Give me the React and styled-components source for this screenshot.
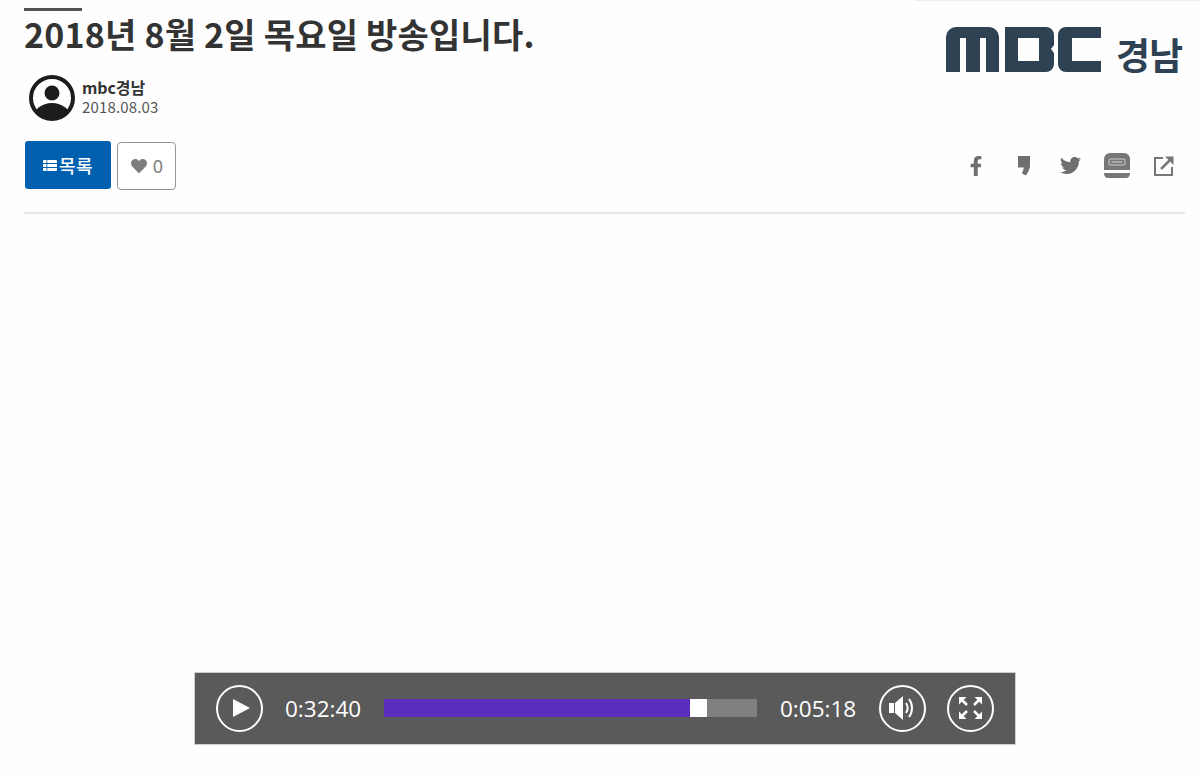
import React from "react";
import styled, { createGlobalStyle } from "styled-components";
import { FaFacebookF, FaTwitter, FaHeart } from "react-icons/fa";

const Global = createGlobalStyle`
  html, body { margin: 0; padding: 0; background: #fff; }
  body { font-family: "Noto Sans CJK KR", "Noto Sans", sans-serif; }
`;
const Page = styled.div`
  width: 1200px; height: 778px; overflow: hidden; box-sizing: border-box;
  padding: 0 14px 0 24px; position: relative; background: #fefefe;
`;
const CornerLine = styled.div`
  position: absolute; top: 0; right: 0; width: 285px; height: 1px; background: #eeeeee;
`;
const Head = styled.header`
  display: flex; justify-content: space-between; align-items: flex-start;
  height: 75px;
`;
const TitleBlock = styled.div`
  padding-top: 8px;
`;
const Rule = styled.div`
  width: 58px; height: 3px; background: #555;
`;
const Title = styled.h1`
  margin: 0; font-size: 34px; line-height: 45px; font-weight: 700; color: #333;
  letter-spacing: 0.2px; white-space: nowrap;
`;
const Logo = styled.div`
  display: flex; align-items: flex-end; gap: 15px; padding: 27px 4px 0 0;
  color: #2f4254;
`;
const LogoRegion = styled.span`
  font-size: 37px; line-height: 37px; font-weight: 700; letter-spacing: -1px; margin-bottom: -1px;
`;
const Author = styled.div`
  display: flex; align-items: center; gap: 7px; padding-left: 5px; height: 46px;
`;
const AuthorText = styled.div`
  display: flex; flex-direction: column; padding-bottom: 2px;
`;
const Name = styled.span`
  font-size: 16px; line-height: 19px; font-weight: 700; color: #333; letter-spacing: -0.1px;
`;
const DateText = styled.span`
  font-size: 15px; line-height: 20px; color: #555; letter-spacing: 0.15px;
`;
const Actions = styled.div`
  display: flex; justify-content: space-between; align-items: center;
  height: 49px; margin-top: 20px; padding-left: 1px;
`;
const Buttons = styled.div`
  display: flex; gap: 6px; align-items: flex-start;
`;
const ListButton = styled.button`
  display: flex; align-items: center; justify-content: center; gap: 2px;
  width: 86px; height: 48px; padding: 0; border: 0; border-radius: 3px;
  background: #0060b0; color: #fff; font: 500 18px "Noto Sans CJK KR", sans-serif;
  letter-spacing: 0.5px;
`;
const LikeButton = styled.button`
  display: flex; align-items: center; justify-content: center; gap: 6px;
  width: 59px; height: 48px; margin-top: 1px; padding: 0 0 0 1px; box-sizing: border-box;
  border: 1.5px solid #959595; border-radius: 4px; background: #fff; color: #7d7d7d;
  font: 400 18px "Noto Sans", sans-serif;
`;
const Social = styled.div`
  display: flex; align-items: center; gap: 3px; color: #6f6f6f;
`;
const SocialSlot = styled.span`
  display: flex; align-items: center; justify-content: center; width: 44px; height: 26px;
`;
const Divider = styled.hr`
  margin: 22px 1px 0 0; border: 0; height: 2px; background: #e6e6e6;
`;
const Player = styled.div`
  display: flex; align-items: center; box-sizing: border-box;
  width: 822px; height: 73px; margin: 458px auto 0; padding: 0 22px 1px;
  background: #5a5a5a; box-shadow: 0 0 0 1px #cfcfcf inset;
`;
const RoundButton = styled.button`
  display: flex; align-items: center; justify-content: center; flex: none;
  width: 47px; height: 47px; padding: 0; border: 2px solid #fff; border-radius: 50%;
  background: transparent; color: #fff; box-sizing: border-box; margin-left: ${(p) => p.$ml || 0}px;
`;
const Time = styled.span`
  flex: none; width: ${(p) => p.$w}px; margin-left: ${(p) => p.$ml}px;
  color: #fff; font: 400 22.5px "Open Sans", sans-serif; white-space: nowrap;
`;
const Track = styled.div`
  display: flex; flex: none; width: 373px; height: 18px; background: #808080;
`;
const Played = styled.div`
  width: 306px; background: #5b2dbf;
`;
const Thumb = styled.div`
  width: 17px; background: #fff;
`;

const Avatar = () => (
  <svg width="46" height="46" viewBox="0 0 46 46">
    <defs><clipPath id="av"><circle cx="23" cy="23" r="21" /></clipPath></defs>
    <circle cx="23" cy="23" r="21" fill="#fff" stroke="#1c1c1c" strokeWidth="4" />
    <circle cx="23" cy="18" r="7.5" fill="#1c1c1c" />
    <ellipse cx="23" cy="43" rx="19" ry="15" fill="#1c1c1c" clipPath="url(#av)" />
  </svg>
);
const MbcMark = () => (
  <svg width="155" height="45" viewBox="0 0 155 45" fill="#2f4254">
    <path d="M0 10a10 10 0 0 1 10-10h33a10 10 0 0 1 10 10v35H40V11h-6v34H20V11h-6v34H0z" />
    <path fillRule="evenodd" d="M59 0h41a8 8 0 0 1 8 8v10l-3 4 3 4v11a8 8 0 0 1-8 8H59zM72 11v23h21V11z" />
    <path d="M155 0v11h-29v23h29v11h-35a8 8 0 0 1-8-8V8a8 8 0 0 1 8-8z" />
  </svg>
);
const ListIcon = () => (
  <svg width="14" height="11" viewBox="0 0 14 11" fill="#fff">
    <path d="M1 0h12a1 1 0 0 1 1 1v2H0V1a1 1 0 0 1 1-1zM0 4h14v3H0zM0 8h14v2a1 1 0 0 1-1 1H1a1 1 0 0 1-1-1z" />
    <rect x="3.500" y="0" width=".8" height="11" fill="#0060b0" />
  </svg>
);
const KakaoStory = () => (
  <svg width="13" height="20" viewBox="0 0 13 20" fill="currentColor">
    <path d="M1 0h12v10c0 3-2 6-4 9.500l-4-2 2-6H1z" />
  </svg>
);
const Band = () => (
  <svg width="26" height="25" viewBox="0 0 26 25">
    <path d="M6 0h14a6 6 0 0 1 6 6v11H0V6a6 6 0 0 1 6-6z" fill="#777" />
    <rect x="5" y="6" width="16" height="6" rx="1" fill="none" stroke="#cfcfcf" strokeWidth="1" />
    <path d="M7.500 8h11v2h-11z" fill="#a8a8a8" />
    <path d="M0 20h26c0 3-1.500 5-4 5H4c-2.500 0-4-2-4-5z" fill="#777" />
  </svg>
);
const ShareIcon = () => (
  <svg width="20" height="20" viewBox="0 0 20 20" fill="none" stroke="#777" strokeWidth="2">
    <path d="M9 2H1v17h17v-8" />
    <path d="M7 13L16 4" strokeWidth="2.500" />
    <path d="M11 0.500h8.500V9z" fill="#777" stroke="none" />
  </svg>
);
const PlayIcon = () => (
  <svg width="20" height="18" viewBox="0 0 20 18" fill="#fff"><path d="M3 0l17 9L3 18z" /></svg>
);
const VolumeIcon = () => (
  <svg width="30" height="26" viewBox="0 0 30 26" fill="none">
    <path d="M1 8h5v10H1zM7 8l8-7v24l-8-7z" fill="#fff" />
    <path d="M18 8c2 3 2 7 0 10" stroke="#fff" strokeWidth="2" />
    <path d="M21 4c4 5 4 13 0 18" stroke="#fff" strokeWidth="2" />
  </svg>
);
const ExpandIcon = () => (
  <svg width="25" height="24" viewBox="0 0 25 24" fill="#fff" stroke="#fff" strokeWidth="2.500">
    <path d="M4 4l5 5M21 4l-5 5M4 20l5-5M21 20l-5-5" />
    <path stroke="none" d="M1 1h7.500L1 8.500zM24 1h-7.500L24 8.500zM1 23h7.500L1 15.500zM24 23h-7.500L24 15.500z" />
  </svg>
);

export default function App() {
  return (
    <Page>
      <Global />
      <CornerLine />
      <Head>
        <TitleBlock>
          <Rule />
          <Title>2018년 8월 2일 목요일 방송입니다.</Title>
        </TitleBlock>
        <Logo>
          <MbcMark />
          <LogoRegion>경남</LogoRegion>
        </Logo>
      </Head>
      <Author>
        <Avatar />
        <AuthorText>
          <Name>mbc경남</Name>
          <DateText>2018.08.03</DateText>
        </AuthorText>
      </Author>
      <Actions>
        <Buttons>
          <ListButton><ListIcon />목록</ListButton>
          <LikeButton><FaHeart size={16} />0</LikeButton>
        </Buttons>
        <Social>
          <SocialSlot><FaFacebookF size={20} /></SocialSlot>
          <SocialSlot><KakaoStory /></SocialSlot>
          <SocialSlot><FaTwitter size={21} /></SocialSlot>
          <SocialSlot><Band /></SocialSlot>
          <SocialSlot><ShareIcon /></SocialSlot>
        </Social>
      </Actions>
      <Divider />
      <Player>
        <RoundButton aria-label="play"><PlayIcon /></RoundButton>
        <Time $w={99} $ml={22}>0:32:40</Time>
        <Track>
          <Played />
          <Thumb />
        </Track>
        <Time $w={99} $ml={23}>0:05:18</Time>
        <RoundButton aria-label="volume"><VolumeIcon /></RoundButton>
        <RoundButton aria-label="fullscreen" $ml={21}><ExpandIcon /></RoundButton>
      </Player>
    </Page>
  );
}
